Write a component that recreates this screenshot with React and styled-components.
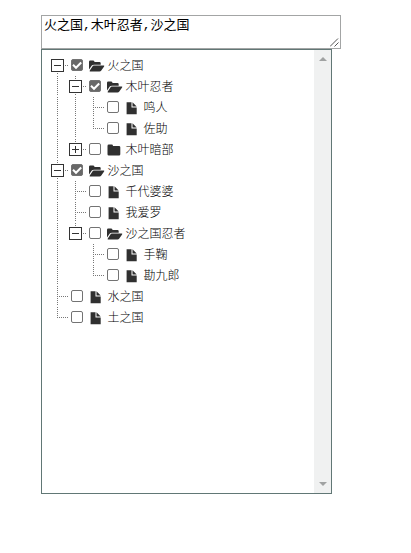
import React from "react";
import styled, { createGlobalStyle, css } from "styled-components";

const GlobalStyle = createGlobalStyle`
  body {
    margin: 0;
    background: #fff;
    font-family: "Noto Sans CJK SC", sans-serif;
  }
`;

const Picker = styled.div`
  display: flex;
  flex-direction: column;
  align-items: flex-start;
  padding: 15px 0 0 41px;
`;

const ValueField = styled.div`
  display: flex;
  justify-content: space-between;
  box-sizing: border-box;
  width: 300px;
  height: 34px;
  padding: 1px 1px 1px 2px;
  border: 1px solid #a3a5a5;
  color: #000;
  font: 13px/18px "Liberation Mono", "Noto Sans CJK SC", monospace;
  white-space: nowrap;
`;

const Grip = styled.svg`
  align-self: flex-end;
  width: 9px;
  height: 9px;
  flex: none;
`;

const Panel = styled.div`
  display: flex;
  box-sizing: border-box;
  width: 291px;
  height: 445px;
  border: 1px solid #617775;
  background: #fff;
`;

const Tree = styled.ul`
  flex: 1;
  margin: 0;
  padding: 5px 0 0 9px;
  list-style: none;
`;

const Branch = styled.ul`
  margin: 0;
  padding: 0;
  list-style: none;
`;

const Row = styled.div`
  display: flex;
  align-items: center;
  height: 21px;
`;

const vertical = "repeating-linear-gradient(to bottom, #777 0 1px, transparent 1px 2px)";
const horizontal = "repeating-linear-gradient(to right, #777 0 1px, transparent 1px 2px)";

const Guide = styled.span`
  display: flex;
  align-items: center;
  flex: none;
  width: 18px;
  height: 21px;
  background-repeat: no-repeat;
  ${({ $line }) =>
    $line === "through" &&
    css`
      background-image: ${vertical};
      background-position: 6px 0;
      background-size: 1px 20px;
    `}
  ${({ $line }) =>
    $line === "middle" &&
    css`
      background-image: ${vertical}, ${horizontal};
      background-position: 6px 0, 6px 10px;
      background-size: 1px 20px, 11px 1px;
    `}
  ${({ $line }) =>
    $line === "last" &&
    css`
      background-image: ${vertical}, ${horizontal};
      background-position: 6px 0, 6px 10px;
      background-size: 1px 11px, 11px 1px;
    `}
  ${({ $line }) =>
    $line === "first" &&
    css`
      background-image: ${vertical}, ${horizontal};
      background-position: 6px 10px, 6px 10px;
      background-size: 1px 10px, 11px 1px;
    `}
`;

const Toggle = styled.svg`
  display: block;
  width: 13px;
  height: 13px;
`;

const Check = styled.span`
  display: flex;
  box-sizing: border-box;
  flex: none;
  width: 12px;
  height: 12px;
  margin: 0 6px 1px 2px;
  border: 1px solid #737373;
  border-radius: 2px;
  background: ${({ $on }) => ($on ? "#686868" : "#fff")};
`;

const IconSlot = styled.svg`
  flex: none;
  width: 16px;
  height: 14px;
  margin-right: 2.5px;
  fill: #303030;
`;

const Label = styled.span`
  margin-bottom: 1px;
  color: #000;
  font-size: 12px;
  font-weight: 300;
  line-height: 20px;
  white-space: nowrap;
`;

const ScrollBar = styled.div`
  display: flex;
  flex-direction: column;
  justify-content: space-between;
  align-items: center;
  box-sizing: border-box;
  width: 17px;
  padding: 7px 0 7px;
  background: #f0f1f1;
`;

const Arrow = styled.svg`
  width: 8px;
  height: 4px;
  fill: #a0a2a2;
`;

const nodes = [
  {
    name: "火之国",
    checked: true,
    open: true,
    children: [
      {
        name: "木叶忍者",
        checked: true,
        open: true,
        children: [{ name: "鸣人" }, { name: "佐助" }],
      },
      { name: "木叶暗部", children: [] },
    ],
  },
  {
    name: "沙之国",
    checked: true,
    open: true,
    children: [
      { name: "千代婆婆" },
      { name: "我爱罗" },
      {
        name: "沙之国忍者",
        open: true,
        children: [{ name: "手鞠" }, { name: "勘九郎" }],
      },
    ],
  },
  { name: "水之国" },
  { name: "土之国" },
];

function NodeIcon({ node }) {
  if (!node.children) {
    return (
      <IconSlot viewBox="0 0 16 14">
        <path d="M1.6 1.2H6.5V6.6H11.7V13.2H1.6ZM7.5 1.2L11.7 5.4V5.6H7.5Z" />
      </IconSlot>
    );
  }
  if (node.open) {
    return (
      <IconSlot viewBox="0 0 16 14">
        <path d="M0 10.5V2.7Q0 1.5 1.2 1.5H4.3Q5.5 1.5 5.5 3H10.5Q11.7 3 11.7 4.2V5.8H5Q3.6 5.8 2.8 6.6Z" />
        <path d="M4.7 6.5H14.8Q15.7 6.5 15.1 7.4L12.3 11.6Q11.6 12.5 10.5 12.5H1.1Q.2 12.5 .8 11.6L3.6 7.2Q4.1 6.5 4.7 6.5Z" />
      </IconSlot>
    );
  }
  return (
    <IconSlot viewBox="0 0 16 14">
      <path d="M.5 11.2V2.9Q.5 1.6 1.8 1.6H4.7Q6 1.6 6 3H12Q13.3 3 13.3 4.3V11.2Q13.3 12.4 12 12.4H1.8Q.5 12.4 .5 11.2Z" />
    </IconSlot>
  );
}

function Node({ node, trail, line, last }) {
  const next = [...trail, last ? "none" : "through"];
  return (
    <li>
      <Row>
        {trail.map((kind, i) => (
          <Guide key={i} $line={kind} />
        ))}
        <Guide $line={line}>
          {node.children && (
            <Toggle viewBox="0 0 13 13">
              <rect x=".5" y=".5" width="12" height="12" fill="#fff" stroke="#333" />
              <path d={node.open ? "M3 6.5H10" : "M3 6.5H10M6.5 3V10"} stroke="#333" />
            </Toggle>
          )}
        </Guide>
        <Check $on={node.checked}>
          {node.checked && (
            <svg width="10" height="10" viewBox="0 0 10 10">
              <path d="M1 4.8L4 7.8L9.2 2.5" fill="none" stroke="#fff" strokeWidth="2" />
            </svg>
          )}
        </Check>
        <NodeIcon node={node} />
        <Label>{node.name}</Label>
      </Row>
      {node.open && (
        <Branch>
          {node.children.map((child, i) => {
            const end = i === node.children.length - 1;
            return (
              <Node
                key={child.name}
                node={child}
                trail={next}
                line={end ? "last" : "middle"}
                last={end}
              />
            );
          })}
        </Branch>
      )}
    </li>
  );
}

export default function App() {
  return (
    <>
      <GlobalStyle />
      <Picker>
        <ValueField>
          火之国,木叶忍者,沙之国
          <Grip viewBox="0 0 9 9">
            <path d="M0 8.5L8 .5M4.5 8.5L8.5 4.5" stroke="#555" fill="none" />
          </Grip>
        </ValueField>
        <Panel>
          <Tree>
            {nodes.map((node, i) => {
              const end = i === nodes.length - 1;
              const line = i === 0 ? "first" : end ? "last" : "middle";
              return <Node key={node.name} node={node} trail={[]} line={line} last={end} />;
            })}
          </Tree>
          <ScrollBar>
            <Arrow viewBox="0 0 8 4">
              <path d="M0 4L4 0L8 4Z" />
            </Arrow>
            <Arrow viewBox="0 0 8 4">
              <path d="M0 0L4 4L8 0Z" />
            </Arrow>
          </ScrollBar>
        </Panel>
      </Picker>
    </>
  );
}
